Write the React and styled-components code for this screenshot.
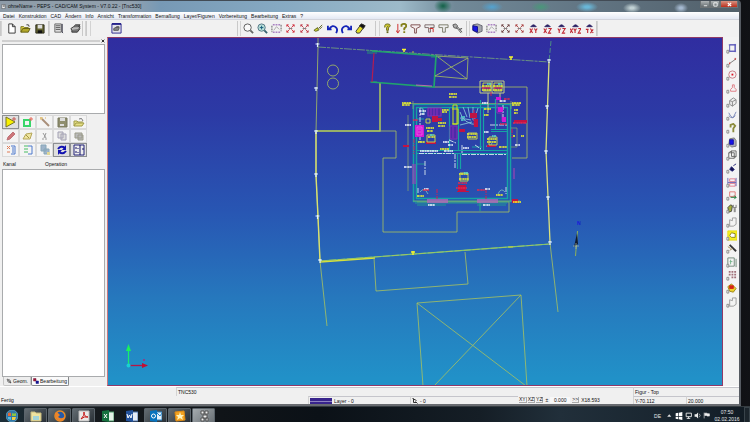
import React from "react";
import styled, { createGlobalStyle } from "styled-components";

const GlobalStyle = createGlobalStyle`
  * { box-sizing: border-box; }
  body { margin: 0; background: #08090c; }
  body, button, input { font-family: "Liberation Sans", Arial, sans-serif; font-size: 5px; line-height: 6px; color: #111; }
  button, input { margin: 0; padding: 0; border: 0; background: none; }
  svg { display: block; }
`;

const Desktop = styled.div`
  min-height: 100vh;
  display: flex;
  flex-direction: column;
  background: linear-gradient(90deg, #08090c 90%, #111216);
`;
const Window = styled.div`
  flex: 1;
  display: flex;
  flex-direction: column;
  margin-right: 9px;
  border-right: 2px solid #565b62;
  border-bottom: 2px solid #686b70;
  border-top-right-radius: 4px;
  background: #f0f0f0;
`;
const TitleBar = styled.header`
  height: 12px;
  display: flex;
  align-items: center;
  gap: 2px;
  padding: 0 1px 1px 1px;
  border-top: 1px solid #424b55;
  background:
    radial-gradient(ellipse 9px 7px at 443px 5px, #1c6650 10%, transparent),
    radial-gradient(ellipse 11px 5px at 492px 6px, #55a0cb 10%, transparent),
    radial-gradient(ellipse 10px 5px at 541px 6px, #4c957b 10%, transparent),
    radial-gradient(ellipse 11px 5px at 587px 6px, #69b6d7 20%, transparent),
    radial-gradient(ellipse 9px 5px at 632px 7px, #c1d1d4 20%, transparent),
    radial-gradient(ellipse 7px 5px at 681px 7px, #a5b9d0 20%, transparent),
    linear-gradient(90deg, #8d9ba7 0, #93a2af 130px, #7799b5 160px, #86a9c2 280px, #9dbac9 400px, #718998 455px, #607381 600px, #52606a 100%);
`;
const Title = styled.h1`
  flex: 1;
  margin: 0;
  font-size: 5px;
  font-weight: 400;
  color: #0b0e12;
`;
const Caption = styled.div`
  display: flex;
  align-self: flex-start;
`;
const CaptionButton = styled.button`
  width: ${(p) => (p.$close ? 18 : 10)}px;
  height: 7px;
  border: 1px solid #6d7376;
  border-top: 0;
  color: #fff;
  background: ${(p) => (p.$close ? "linear-gradient(#d89382,#bc2e1c)" : "linear-gradient(#aeb3b5,#646c70)")};
  svg { margin: auto; }
`;
const MenuBar = styled.nav`
  height: 8px;
  display: flex;
  align-items: center;
  gap: 4px;
  padding: 0 3px;
  background: linear-gradient(#fff, #e3e8f3);
  border-bottom: 1px solid #d2d4dc;
`;
const MenuItem = styled.button`
  white-space: nowrap;
`;
const ToolBar = styled.div`
  height: 17px;
  display: flex;
  align-items: center;
  background: #f1f1f1;
`;
const ToolGroup = styled.div`
  display: flex;
  align-items: center;
  margin-left: ${(p) => p.$gap || 0}px;
`;
const Tool = styled.button`
  width: 14px;
  height: 14px;
  display: grid;
  place-items: center;
`;
const Grip = styled.span`
  width: ${(p) => p.$width || 4}px;
  height: 15px;
  border-left: 1px solid #c9c9c9;
  border-right: 1px solid #d3d3d3;
`;
const Body = styled.div`
  flex: 1;
  display: flex;
`;
const SidePanel = styled.aside`
  width: 107px;
  display: flex;
  flex-direction: column;
  padding: 0 2px 0 2px;
`;
const PanelHead = styled.div`
  height: 7px;
  display: flex;
  align-items: center;
  gap: 1px;
`;
const PanelRule = styled.span`
  flex: 1;
  height: 2px;
  border: 1px solid #cfcfcf;
`;
const PanelClose = styled.button`
  width: 4px;
  height: 4px;
`;
const ListBox = styled.section`
  ${(p) => (p.$grow ? "flex: 1;" : "height: 70px;")}
  border: 1px solid #a9abad;
  background: #fff;
`;
const ToolGrid = styled.div`
  display: grid;
  grid-template-columns: repeat(5, 17px);
  grid-auto-rows: 14px;
  padding: 1px 0;
`;
const GridTool = styled.button`
  display: grid;
  place-items: center;
  border: 1px solid ${(p) => (p.$on ? "#8d8f92" : "#dadada")};
  background: ${(p) => (p.$on ? "#dfdfdf" : "#f4f4f4")};
`;
const ColumnHeads = styled.div`
  height: 11px;
  display: grid;
  grid-template-columns: 42px 1fr;
  align-items: center;
  padding-left: 1px;
`;
const Tabs = styled.div`
  height: 9px;
  display: flex;
  padding-left: 1px;
`;
const Tab = styled.button`
  display: flex;
  align-items: center;
  gap: 1px;
  padding: 0 ${(p) => (p.$on ? 1 : 2)}px;
  border: 1px solid ${(p) => (p.$on ? "#85878a" : "#c6c6c6")};
  border-top: 0;
  border-radius: 0 0 2px 2px;
  background: ${(p) => (p.$on ? "#fafafa" : "#ededed")};
`;
const Canvas = styled.main`
  flex: 1;
  min-width: 0;
  display: flex;
  border: 1px solid #913a68;
  border-left-color: #c87980;
  background: linear-gradient(#302da0 0%, #2c3aa5 22%, #2856b3 50%, #2678bd 75%, #2191c8 98%);
`;
const Drawing = styled.svg`
  width: 100%;
  height: 100%;
`;
const RightBar = styled.div`
  width: 16px;
  display: flex;
  flex-direction: column;
  align-items: center;
  padding-top: 5px;
  background: #f3f3f3;
`;
const RightTool = styled.button`
  width: 14px;
  height: 13px;
  display: grid;
  place-items: center;
  margin-bottom: ${(p) => (p.$loose ? 1 : 0)}px;
`;
const StatusBar = styled.footer`
  display: grid;
  grid-template-rows: 9px 8px;
  border-top: 1px solid #fff;
`;
const StatusRow = styled.div`
  display: grid;
  grid-template-columns: ${(p) => p.$cols};
`;
const Cell = styled.div`
  display: flex;
  align-items: center;
  gap: 2px;
  padding: 0 1px;
  white-space: nowrap;
  border-top: ${(p) => (p.$line ? 1 : 0)}px solid #c5c5cb;
  border-left: ${(p) => (p.$line ? 1 : 0)}px solid #d3d3d3;
`;
const Swatch = styled.span`
  width: 22px;
  height: 6px;
  border-top: 3px solid #38248c;
  border-bottom: 2px solid #38248c;
  background: #8c82be;
`;
const PlaneButton = styled.button`
  height: 6px;
  line-height: 5px;
  min-width: 7px;
  border: 1px solid #aaa;
  border-width: 0 1px 1px 0;
  & + & { margin-left: -1px; }
`;
const StepInput = styled.input`
  width: 20px;
  height: 6px;
  text-align: center;
  background: #f8f8f8;
`;
const TaskBar = styled.footer`
  height: 18px;
  display: flex;
  align-items: center;
  background: linear-gradient(90deg, #1c2f39 0, #171c20 60px, #101418 220px, #0b1117 320px, #151e26 480px, #212f3a 560px, #17232d 700px, #111a22);
  border-top: 1px solid #343b40;
`;
const TaskButton = styled.button`
  width: 23px;
  height: 16px;
  margin-right: 1px;
  display: grid;
  place-items: center;
  border-radius: 1px;
  border: 1px solid ${(p) => (p.$kind === "plain" ? "transparent" : "#5b646b")};
  background: ${(p) =>
    p.$kind === "active" ? "linear-gradient(135deg,#a4aaae,#686f74)" : p.$kind === "open" ? "linear-gradient(135deg,#636c72,#272e34)" : "none"};
`;
const Tray = styled.div`
  margin-left: auto;
  display: flex;
  align-items: center;
  gap: 2px;
  color: #e4e8eb;
`;
const Clock = styled.time`
  width: 30px;
  text-align: center;
  line-height: 7px;
`;
const ShowDesktop = styled.button`
  width: 6px;
  height: 17px;
  border: 1px solid #39434a;
  background: #1c252c;
`;

const Glyph = ({ size = 12, children }) => (
  <svg width={size} height={size} viewBox="0 0 12 12" fill="none" stroke="#333" strokeWidth="1" aria-hidden="true">{children}</svg>
);

const arrowsOut = (c) => <g stroke={c}><path d="M2 2l3 3M10 2L7 5M2 10l3-3M10 10L7 7M2 4V2h2M8 2h2v2M2 8v2h2M8 10h2V8" /><path d="M4 6h4" stroke="#777" /></g>;
const eye = (k) => (
  <>
    <path d="M3 4q3-4 6 0z" fill="#251d64" stroke="#322968" />
    <g stroke="#c02a35" strokeWidth="1.2">{k}</g>
  </>
);
const X = (x) => <path key={x} d={`M${x} 6l3 5M${x + 3} 6l-3 5`} />;
const Y = (x) => <path key={x} d={`M${x} 6l1.5 2.5L${x + 3} 6M${x + 1.5} 8v3`} />;
const Z = (x) => <path key={x} d={`M${x} 6h3l-3 5h3`} />;

const ICONS = {
  neu: <path d="M3 1h4l3 3v7H3zM7 1v3h3" fill="#fff" />,
  oeffnen: <><path d="M1 10V4h3l1 1h4v2" fill="#e4d74d" stroke="#736d17" /><path d="M1 10l2-4h8l-2 4z" fill="#b2a72a" stroke="#635d12" /><path d="M7 2q3-1 3 2" /></>,
  speichern: <><path d="M2 2h9v9H2z" fill="#63632f" stroke="#252516" /><path d="M4 2h5v4H4z" fill="#ddd" stroke="none" /><path d="M4 8h5v3H4z" fill="#111" stroke="none" /></>,
  liste: <><path d="M2 1h7v9H2z" fill="#ddd" stroke="#666" /><path d="M3 3h5M3 5h5M3 7h5" stroke="#555" /><path d="M10 1v9l1 1" stroke="#223" /></>,
  druck: <><path d="M1 6l3-2h7l-2 4H2z" fill="#bbb" /><path d="M4 4l2-2h5L9 4M2 8v2h6l3-4" fill="#777" /></>,
  druckrahmen: <><path d="M1 1h10v10H1z" fill="#e3e3ea" stroke="#26228b" strokeWidth="1" /><path d="M1 1h10" stroke="#26228b" strokeWidth="2" /><path d="M3 6l2-1h4L8 8H3zM5 5l1-1h3" fill="#888" stroke="#555" /></>,
  lupe: <><circle cx="5" cy="5" r="4" stroke="#555" fill="#fafafa" /><path d="M8 8l3 3" strokeWidth="2" stroke="#666" /></>,
  lupeplus: <><circle cx="5" cy="5" r="4" stroke="#4e7180" fill="#b9e0da" /><path d="M3 5h4M5 3v4" stroke="#165b79" /><path d="M8 8l3 3" strokeWidth="2" stroke="#366270" /></>,
  fenster: <><path d="M2 2h8M2 10h8" stroke="#7d3ba5" strokeDasharray="2 1" /><path d="M1 3v7M11 2v7" stroke="#555" strokeDasharray="2 1" /><path d="M3 8l3-4 3 3" stroke="#aaa" /></>,
  alles: arrowsOut("#d12c3a"),
  alles2: arrowsOut("#be3544"),
  pinsel: <path d="M1 8l4-3 1 3-3 1zM6 6l4-4M7 7l3-3" fill="#d5dc32" stroke="#5a5e1f" />,
  undo: <path d="M1 3v4h4M2 7q4-6 8-2 2 2 0 6" stroke="#1525b8" strokeWidth="2" />,
  redo: <path d="M11 3v4H7M10 7Q6 1 2 5q-2 2 0 6" stroke="#1525b8" strokeWidth="2" />,
  radierer: <><path d="M1 9l6-8 4 2-6 8-3 0z" fill="#e2db24" stroke="#333" /><path d="M5 3l2-2 4 2-2 3z" fill="#111" /></>,
  frage: <><path d="M3 5V3q0-2 3-2t3 2q0 1-2 2v3H5V5l2-2" fill="#cfc92d" stroke="#67651b" /><path d="M5 10h2" stroke="#67651b" strokeWidth="2" /></>,
  frage2: <><path d="M2 1v9M0 8l2 3 2-3" stroke="#c22" /><path d="M6 4V2q3-2 5 0v2L9 6v2M8 10h2" stroke="#85811b" strokeWidth="2" /></>,
  filter: <path d="M1 2h10v2L7 6v5H5V6L1 4z" fill="#f4eeee" stroke="#7c4b4b" />,
  filter2: <><path d="M1 2h10v3H7v5H5V5H1z" fill="#eee" stroke="#766" /><path d="M6 6h4v4" stroke="#c22" /></>,
  filter3: <path d="M1 2h10v3H8v5H5V5H1z" fill="#eee" stroke="#776" />,
  schluessel: <><path d="M1 2l3-1 2 2-1 3-3-1zM5 5l5 6M6 4l5 6" fill="#aaa" stroke="#555" /><path d="M8 7l3-1" /></>,
  solid: <><path d="M1 2l5-1 5 2v6l-5 2-5-3z" fill="#a5a6ac" stroke="#626471" /><path d="M1 3l5 1v6L1 8z" fill="#1b18e3" stroke="#11108d" /></>,
  kreuz: arrowsOut("#6b3d3d"),
  kreuz2: arrowsOut("#ab3f3f"),
  xy: eye([X(2), Y(7)]), xz: eye([X(2), Z(7)]), yz: eye([Y(2), Z(7)]),
  xyz: eye([X(0), Y(4), Z(9)]), rot: eye(<path d="M2 7h3M4 7v4M7 6l3 5M7 11l3-4" />),
};

const PANEL_TOOLS = [
  ["Start", 1, <path d="M1 1l9 5-9 5z" fill="#f8f000" stroke="#777526" />, <path d="M9 1v4M7 3h4" stroke="#c75a55" />],
  ["Neue Operation", 0, <path d="M2 4h6v6H2z" stroke="#39d66a" strokeWidth="2" />, <path d="M9 1v4M7 3h4" stroke="#e8685c" />],
  ["Assistent", 0, <path d="M3 3l7 7" stroke="#a98f7a" strokeWidth="2" />, <path d="M2 1v3M1 2h3M6 2h1" stroke="#dbb35e" />],
  ["Sichern", 0, <path d="M2 2h9v9H2z" fill="#8f8e6e" stroke="#77765c" />, <path d="M4 2h5v3H4zM4 8h4v2H4z" fill="#ddd" stroke="none" />],
  ["Laden", 0, <path d="M1 10V5h3l1 1h5M1 10l2-3h8l-2 3z" fill="#e5df85" stroke="#a09b48" />, <path d="M6 3q3-2 4 2" stroke="#777" />],
  ["Ändern", 0, <path d="M2 10l1-3 5-5 2 2-5 5z" fill="#ce777a" stroke="#be737a" />],
  ["Löschen", 0, <path d="M1 9l3-5 6-1-2 6z" fill="#efe6a0" stroke="#b5a65a" />, <path d="M4 5l3 3" stroke="#a59440" />],
  ["Ausschneiden", 0, <path d="M4 3l3 5M7 3L5 8M4 8v2M7 8v2" stroke="#999" />],
  ["Kopieren", 0, <path d="M2 2h5v6H2zM5 4h5v6H5z" fill="#ddd" stroke="#a3a1b4" />],
  ["Einfügen", 0, <path d="M2 3h7v5H2zM5 5h5v5H5z" fill="#bbb" stroke="#9b9b8b" />],
  ["Eingang", 0, <path d="M6 2h4v8H6M8 3v6" stroke="#4c78cc" />, <path d="M2 2l3 3M5 2L2 5M2 8h3" stroke="#e07b55" />],
  ["Ausgang", 0, <path d="M6 2h4v8H6" stroke="#4c78cc" />, <path d="M2 2h4M2 5h4M2 8h4" stroke="#49bd63" />],
  ["Ebenen", 0, <path d="M2 1h5v6H2zM5 5h5v5H5z" fill="#9eb4ca" stroke="#87a6b8" />, <path d="M8 8h3v3H8z" fill="#e0d798" stroke="none" />],
  ["Aktualisieren", 1, <path d="M2 5q3-4 7-1M10 7q-3 4-7 1" stroke="#1111b0" strokeWidth="2" />, <path d="M10 1v5H6zM2 11V6h4z" fill="#1111b0" stroke="none" />],
  ["Ansicht teilen", 1, <path d="M1 1h10v10H1z" fill="#eee" stroke="#22227a" strokeWidth="1" />, <path d="M7 1v10M3 3v2M3 7v2M5 4v1M5 8v1M9 5h2" stroke="#141466" />],
];

const corner = <path d="M1 8h2v3H1z" fill="#fff" stroke="#888" strokeWidth="1" />;
const RIGHT_TOOLS = [
  ["Punkt", <path d="M4 2h6v7H4zM3 2h8M3 9h8M10 1v9" stroke="#5653b8" />],
  ["Linie", <path d="M4 7l7-5" stroke="#777" />, <path d="M4 6v2M10 1v2" stroke="#c11" strokeWidth="1" />],
  ["Kreis", <circle cx="7" cy="5" r="4" stroke="#c77882" />, <path d="M6 5h2" stroke="#d12" strokeWidth="2" />],
  ["Kontur", <path d="M5 9V7l2-2V2h2v3l2 2v2z" stroke="#de7a82" />],
  ["Körper", <path d="M4 4l4-3 3 2v4l-4 3-3-2zM4 4l3 1v5M7 5l4-2" fill="#eee" stroke="#888" />],
  ["Kurve", <path d="M3 3q3 6 5 5l3-6M3 6q4 5 7 0" stroke="#7482b5" />],
  ["Abfrage", <path d="M5 5V2l3-1 2 2-2 3v4" stroke="#8b8b3c" strokeWidth="2" />],
  ["Volumen", <path d="M4 2l5-1 2 3v6l-5 1-3-3z" fill="#aab" stroke="#777" />, <path d="M4 3h4v5H4z" fill="#1611ed" stroke="#1513a0" />],
  ["Gitter", <path d="M3 3h6v6H3zM6 1h5v6H6zM3 3l3-2M9 9l2-2" stroke="#666" />],
  ["Trimmen", <path d="M4 7l2-3 3 3-2 2zM8 3l3-2" fill="#131350" stroke="#222276" />],
  ["Maß", <path d="M4 2h6v3H4zM4 7h6v3H4z" stroke="#df7c8c" />, <path d="M2 1v7M11 1v9M2 6h9" stroke="#6e67b5" />],
  ["Verschieben", <path d="M4 2h6v5H4z" stroke="#e07575" />, <path d="M5 8h6M9 6l2 2-2 2" stroke="#147630" />],
  ["Werkzeuge", <path d="M2 5l3-3 2 1-1 6-3 1z" fill="#a4af3c" stroke="#444" />, <path d="M8 2v3l1 1v4M11 2v3l-1 1v4M8 5h3" stroke="#777" />],
  ["Fläche", <path d="M4 3l3 1V1h4v7l-3 2H4z" stroke="#999" />],
  ["Tasche", <path d="M2 1h10v10H2z" fill="#f5ef20" stroke="#e2da13" />, <path d="M4 6l2-3 4 1v4H6z" fill="#fff" stroke="#87811a" />],
  ["Zauberstab", <path d="M4 2l7 7" strokeWidth="2" />, <path d="M2 4l3 2M4 8l3-2" stroke="#9b8951" />],
  ["Tabelle", <path d="M2 1h7v9H2zM11 2v9" stroke="#6c8676" />, <path d="M4 5h3M5 3v5" stroke="#75b48a" />],
  ["Muster", <path d="M3 2h2M6 2h2M9 2h2M3 5h2M6 5h2M9 5h2M6 8h2M9 8h2" stroke="#a0707a" strokeWidth="2" />],
  ["Fräsen", <path d="M2 4l4-3 5 5-3 4-4-1z" fill="#ecd12b" stroke="#9a831a" />, <path d="M4 3h4v3H4z" fill="#d42516" stroke="#d42516" />],
  ["Rahmen", <path d="M4 3l3 1V1h4v7l-3 2H4z" stroke="#999" />],
];

const toolsFor = (list) => list.map((n) => (
  <Tool key={n} aria-label={n} title={n}><Glyph size={11}>{ICONS[n]}</Glyph></Tool>
));

const Marks = ({ fill, items }) => (
  <g fill={fill} stroke="none">{items.map(([x, y, w, h], i) => <rect key={i} x={x} y={y} width={w} height={h} />)}</g>
);
const Lettering = ({ color, items }) => (
  <g stroke={color} strokeWidth="1.6">{items.map(([x, y, w], i) => <path key={i} d={`M${x} ${y}h${w}`} strokeDasharray={i % 2 ? "2 .4 1 .3" : "1.6 .3 2.5 .4"} />)}</g>
);

const TREES = [[317.5, 44], [316, 88], [316, 131], [316, 174], [317.5, 216], [320, 260], [549, 60], [547, 106], [546, 151], [548, 197], [550, 242]];

const SitePlan = () => (
  <g stroke="#a9c35e" strokeWidth=".8">
    <path d="M318 37v10L316 132v43l2 42 2 44 7 65" />
    <path d="M316 132v43l2 42 2 44" stroke="#d9e070" strokeWidth="1.4" />
    <path d="M318 47L549 62" strokeDasharray="8 1 3 1" stroke="#78aa79" />
    <path d="M551 41l-2 21" stroke="#53a67c" strokeDasharray="5 2" />
    <path d="M549 62l-3 89 4 91" stroke="#dbe17b" strokeWidth="1.3" />
    <path d="M550 243l8 69" />
    <path d="M320 261l230-17" stroke="#72c979" strokeWidth="1.2" />
    <path d="M320 262l55-4" stroke="#d6e13b" strokeWidth="1.6" />
    <path d="M320 261l230-17" strokeDasharray="7 2" />
    <path d="M374 258l2 33 92-7-3-32" />
    <path d="M417 303l104-8 6 91M417 303l6 83M417 303l109 83M521 295l-87 91" />
    <circle cx="333" cy="70.500" r="5.500" /><circle cx="333" cy="83.500" r="5.500" />
    <path d="M380 83v48M316 131h80v27h-13v74h74v-20h52v-10M434 87h93v71h-15" />
    <path d="M380 83v48h-64" strokeWidth="1.3" />
    <path d="M372 51l64 5-2 31-63-5" stroke="#20a36d" strokeWidth="1.7" />
    <path d="M367 51h10M367 53h10M431 57h10M370 82h7" stroke="#23a86d" />
    <path d="M374 53l-2 29" stroke="#b21d51" strokeWidth="1.2" />
    <path d="M416 85l16 1" stroke="#dc72b0" />
    <path d="M436 56l32 2-1 21-32-3M438 57l29 22M435 76l33-18" />
    <path d="M402 49.500h4M404 49v3M509 57h4M511 57v3M411 252h4M413 251v4" stroke="#f4f52d" strokeWidth="1.5" />
    <path d="M412 52h2M508 247h5" stroke="#d6dd26" />
    <g stroke="#e2f2ff">{TREES.map(([x, y]) => <path key={`${x}-${y}`} d={`M${x - 2} ${y}h4M${x} ${y - 1}v4`} strokeWidth="1.2" />)}</g>
  </g>
);

const FloorPlan = () => (
  <g strokeWidth="1">
    <g stroke="#16a3a4">
      <path d="M413.500 104.500h97v97h-97zM416.500 107.500h91v91h-91z" strokeWidth="1.5" />
      <path d="M416 150.500h92M416 153.500h92M457.500 153v16M460.500 153v16M449.500 107v43M458.500 107v43M480.500 100v50M483.500 107v43M491 129.500h17M491 131.500h17M495.500 99v30" strokeWidth="1.2" />
      <path d="M480 201v10" stroke="#1db185" />
      <path d="M423 107v8M417 119h7M472 147h10" />
    </g>
    <path d="M403 103.500h118M413 101v8M511 101v8M413 201h107M511 128h6v19h-6M408 115v76M417 202h92" stroke="#8eac66" strokeWidth=".7" />
    <path d="M415 203h92M417 205h29M477 205h29M417 164h8" stroke="#22a991" strokeWidth=".8" />
    <path d="M427 200h21M477 200h21M427 202h21M477 202h21" stroke="#b766bd" strokeWidth="1.4" />
    <path d="M413 164v20M415 164v20M514 168v11" stroke="#9b45b5" strokeWidth="1.2" />
    <g stroke="#8430b8" fill="#4f2aa8"><path d="M428 108h13v8h-13zM431 108v8M434 108v8M437 108v8" strokeWidth="1.2" /><path d="M450 126h7v13h-7zM453 127v11" /><path d="M497 100v13h5v8" fill="none" /></g>
    <path d="M460 112q3 12 18 13M463 107l4 10M468 107l2 11M473 107v13M478 108l-4 13M460 118l11 2M460 125l12-3" stroke="#82c0d8" strokeWidth=".9" />
    <path d="M480 81h24v12h-24zM492 81v12M488 93v20M500 93v9" stroke="#c3cd85" />
    <path d="M453 105h4v19h-4zM452 109h6v15h-6" stroke="#cbe51e" />
    <path d="M420 108v34M419 153.500h36M462 154.500h44M455 154v14M462 145v9M425 161v14M449 140l7 3M475 145l6 4M490 125h17M503 105v15M418 188v6M506 187v7" stroke="#d7e6f1" strokeDasharray="5 1 2 1" strokeWidth=".9" />
    <path d="M420 192q4-6 8 2M498 194q3-7 7-2M424 113q0-5-4-5M486 146q4 2 6-3" stroke="#74b9c1" strokeWidth=".9" />
    <path d="M512 129v9M414 139v15M491 92v5M437 189v10M486 189v10M474 110v15" stroke="#d11e52" strokeDasharray="4 1 1 1" />
    <Marks fill="#d317d5" items={[[415, 125, 9, 12], [498, 107, 5, 5], [502, 117, 4, 5], [496, 97, 5, 3]]} />
    <path d="M417 127h5v8h-5zM418 129h3M418 132h3" stroke="#f07ded" strokeWidth=".6" />
    <Marks fill="#c21344" items={[[432, 116, 6, 6], [438, 118, 4, 3], [470, 113, 7, 5], [459, 129, 6, 3], [426, 142, 10, 2], [458, 185, 8, 7], [474, 119, 4, 8], [403, 145, 6, 2], [514, 120, 13, 3], [512, 199, 6, 4], [487, 145, 9, 2], [457, 191, 12, 1]]} />
    <Lettering color="#f6fb26" items={[[449, 94, 8], [449, 97, 8], [402, 103, 9], [402, 105, 8], [512, 103, 9], [512, 105, 8], [442, 110, 7], [442, 112, 5], [438, 123, 8], [438, 126, 7], [426, 128, 8], [427, 131, 6], [418, 142, 7], [482, 86, 9], [482, 90, 9], [493, 86, 10], [493, 90, 9], [484, 109, 7], [484, 115, 5], [467, 134, 10], [467, 137, 9], [487, 139, 10], [487, 142, 9], [428, 137, 7], [440, 149, 9], [499, 147, 8], [459, 174, 9], [459, 179, 10], [514, 110, 4], [514, 113, 4], [513, 202, 8], [513, 136, 2], [521, 136, 3], [417, 196, 7], [496, 195, 7]]} />
    <g stroke="#d2df44" strokeWidth=".9"><path d="M468 133h9v6h-9zM460 173h8v8h-8zM427 135h8v7h-8zM489 137h8v8h-8zM483 83h8v8h-8zM494 83h8v8h-8zM426 119h4v4h-4z" /></g>
    <Lettering color="#56dfce" items={[[461, 117, 4], [461, 120, 4], [464, 173, 4], [430, 135, 4], [487, 84, 4], [498, 84, 4], [492, 136, 4]]} />
    <Lettering color="#f4f8ff" items={[[405, 125, 6], [419, 111, 7], [420, 114, 5], [404, 167, 8], [428, 205, 7], [483, 205, 7], [443, 142, 6], [448, 145, 5], [463, 148, 6], [500, 101, 6], [482, 103, 6], [515, 145, 5], [420, 151, 18], [444, 151, 9], [424, 189, 5], [485, 189, 5], [484, 132, 5]]} />
    <Lettering color="#e22a50" items={[[413, 120, 5], [504, 99, 6], [456, 188, 11], [458, 183, 9], [423, 190, 6], [477, 190, 8], [500, 124, 7], [513, 123, 13], [482, 88, 8], [494, 88, 8]]} />
  </g>
);

const CadDrawing = () => (
  <Drawing viewBox="108 38 614 347" fill="none" role="img" aria-label="Lageplan mit Grundriss">
    <SitePlan />
    <FloorPlan />
    <path d="M128.500 365v-15" stroke="#18ec70" strokeWidth="1.3" /><path d="M126 351l2.500-7 2.500 7z" fill="#19f35a" />
    <path d="M129 365.500h14" stroke="#b81547" strokeWidth="1.3" /><path d="M142 363l6 2.500-6 2.500z" fill="#c30e32" />
    <circle cx="128.500" cy="365.500" r="2" fill="#19cfd4" /><path d="M143 359l2 2M145 359l-2 2" stroke="#ad2775" strokeWidth=".7" />
    <path d="M577.500 231l-2 25" stroke="#8eb15a" /><path d="M577 233l1 11-4 3z" fill="#101b31" /><path d="M573 246h6M576 243v6" stroke="#b0bda3" strokeWidth=".7" />
    <text x="577" y="225" fontSize="5" fontWeight="700" fill="#1616db">N</text>
  </Drawing>
);

const TASKS = [
  ["Start", "plain", <><circle cx="6" cy="6" r="6" fill="#3178a9" stroke="#79b9d3" strokeWidth=".6" /><path d="M2 3q2-1 3 0v3H2z" fill="#e56734" stroke="none" /><path d="M6 3q2 1 4 0v3H6z" fill="#8cc640" stroke="none" /><path d="M2 7h3v3L2 9z" fill="#53bce6" stroke="none" /><path d="M6 7h4l-1 3H6z" fill="#f2ce42" stroke="none" /></>],
  ["Explorer", "open", <><path d="M1 2h4l1 1h5v8H1z" fill="#f0e3a0" stroke="#c5b87d" /><path d="M3 6h6v4H3z" fill="#a4d4d8" stroke="none" /></>],
  ["Firefox", "open", <><circle cx="6" cy="6" r="5" fill="#265aa8" stroke="#e88b24" strokeWidth="1.500" /><path d="M1 3q0 8 6 8 4 0 4-5-3 4-7 1l2-2-3-3z" fill="#ee8528" stroke="none" /></>],
  ["Adobe Reader", "open", <><path d="M1 1h10v10H1z" fill="#ece9e8" stroke="#bbb" /><path d="M3 9q4-4 3-7 0 5 4 5-4-1-7 2" stroke="#c51818" /></>],
  ["Excel", "plain", <><path d="M6 2h6v9H6z" fill="#e4f1e8" stroke="#4c9a6a" /><path d="M0 1l7-1v12l-7-1z" fill="#17713f" stroke="none" /><path d="M2 4l3 4M5 4L2 8" stroke="#fff" /></>],
  ["Word", "plain", <><path d="M6 2h6v9H6z" fill="#e5ecf6" stroke="#4c74b0" /><path d="M0 1l7-1v12l-7-1z" fill="#24539c" stroke="none" /><path d="M1 4l1 4 1.500-3L5 8l1-4" stroke="#fff" /></>],
  ["Outlook", "open", <><path d="M6 2h6v8H6z" fill="#e5f1fa" stroke="#2683c7" /><path d="M7 3l3 3 2-3" stroke="#2683c7" /><path d="M0 1l7-1v12l-7-1z" fill="#0873bd" stroke="none" /><circle cx="3.500" cy="6" r="2" stroke="#fff" /></>],
  ["Bilder", "open", <><path d="M1 2l9-1 1 9-9 1z" fill="#f3a321" stroke="#df8b14" /><path d="M6 2l1 3h3L8 7l1 3-3-2-3 2 1-3-2-2h3z" fill="#fff4be" stroke="none" /></>],
  ["PEPS", "active", <><path d="M3 1h3v3H3zM7 1h3v3H7zM5 5h4v3H5zM3 8h3v3H3zM8 8h2v3H8z" fill="#eee" stroke="#555" /></>],
];

const MENUS = ["Datei", "Konstruktion", "CAD", "Ändern", "Info", "Ansicht", "Transformation", "Bemaßung", "Layer/Figuren", "Vorbereitung", "Bearbeitung", "Extras", "?"];

export default function App() {
  return (
    <Desktop>
      <GlobalStyle />
      <Window>
        <TitleBar>
          <Glyph size={5}><path d="M2 1h8v10H2zM5 3h3v3H5z" fill="#eee" /></Glyph>
          <Title>ohneName - PEPS - CAD/CAM System - V7.0.22 - [Tnc530]</Title>
          <Caption>
            <CaptionButton aria-label="Minimieren"><Glyph size={5}><path d="M2 9h8" stroke="#fff" strokeWidth="2" /></Glyph></CaptionButton>
            <CaptionButton aria-label="Maximieren"><Glyph size={5}><path d="M2 2h8v8H2z" stroke="#fff" strokeWidth="2" /></Glyph></CaptionButton>
            <CaptionButton $close aria-label="Schließen"><Glyph size={5}><path d="M2 2l8 8M10 2l-8 8" stroke="#fff" strokeWidth="3" /></Glyph></CaptionButton>
          </Caption>
        </TitleBar>
        <MenuBar>{MENUS.map((m) => <MenuItem key={m}>{m}</MenuItem>)}</MenuBar>
        <ToolBar>
          <Grip $width={2} />
          <ToolGroup $gap={2}>{toolsFor(["neu", "oeffnen", "speichern"])}</ToolGroup>
          <ToolGroup $gap={2}><Grip $width={1} /></ToolGroup>
          <ToolGroup $gap={1}>{toolsFor(["liste"])}</ToolGroup>
          <ToolGroup $gap={3}>{toolsFor(["druck"])}<Grip /><Grip $width={5} /></ToolGroup>
          <ToolGroup $gap={18}>{toolsFor(["druckrahmen"])}</ToolGroup>
          <ToolGroup $gap={114}><Grip /></ToolGroup>
          <ToolGroup>{toolsFor(["lupe", "lupeplus", "fenster", "alles", "alles2", "pinsel", "undo", "redo", "radierer"])}</ToolGroup>
          <ToolGroup $gap={8}><Grip $width={5} />{toolsFor(["frage", "frage2", "filter", "filter2", "filter3", "schluessel"])}</ToolGroup>
          <ToolGroup $gap={2}><Grip />{toolsFor(["solid", "fenster", "kreuz", "kreuz2", "xy", "xz", "yz", "xyz", "rot"])}<Grip $width={1} /></ToolGroup>
        </ToolBar>
        <Body>
          <SidePanel>
            <PanelHead><PanelRule /><PanelClose aria-label="Leiste schließen"><Glyph size={4}><path d="M2 2l8 8M10 2l-8 8" strokeWidth="3" /></Glyph></PanelClose></PanelHead>
            <ListBox aria-label="Vorschau" />
            <ToolGrid>
              {PANEL_TOOLS.map(([n, on, a, b]) => <GridTool key={n} $on={on} aria-label={n}><Glyph>{a}{b}</Glyph></GridTool>)}
            </ToolGrid>
            <ColumnHeads><span>Kanal</span><span>Operation</span></ColumnHeads>
            <ListBox $grow aria-label="Operationen" />
            <Tabs>
              <Tab><Glyph size={6}><path d="M2 2l6 2 2 6-6-2z" fill="#ccc" /><path d="M4 4l6 6" /></Glyph>Geom.</Tab>
              <Tab $on><Glyph size={6}><path d="M1 1h5v5H1z" fill="#9a173a" stroke="#7b1737" /><path d="M6 6h5v5H6z" fill="#16168e" stroke="#16168e" /></Glyph>Bearbeitung</Tab>
            </Tabs>
          </SidePanel>
          <Canvas><CadDrawing /></Canvas>
          <RightBar>
            {RIGHT_TOOLS.map(([n, a, b], i) => <RightTool key={n} $loose={i % 3 === 0} aria-label={n}><Glyph size={11}>{a}{b}{corner}</Glyph></RightTool>)}
          </RightBar>
        </Body>
        <StatusBar>
          <StatusRow $cols="176px 1fr 106px">
            <Cell /><Cell $line>TNC530</Cell><Cell $line>Figur - Top</Cell>
          </StatusRow>
          <StatusRow $cols="308px 102px 1fr 115px 53px 53px">
            <Cell>Fertig</Cell>
            <Cell $line><Swatch />Layer - 0</Cell>
            <Cell $line><Glyph size={6}><path d="M1 1l8 4M3 1v8h6M7 7l4 4" strokeWidth="2" /></Glyph>- 0</Cell>
            <Cell>
              <PlaneButton>XY</PlaneButton><PlaneButton>XZ</PlaneButton><PlaneButton>YZ</PlaneButton>
              <span>±</span>
              <StepInput aria-label="Schrittweite" defaultValue="0.000" />
              <PlaneButton aria-label="Weiter">&gt;&gt;</PlaneButton>
              <span>X18.593</span>
            </Cell>
            <Cell $line>Y-70.112</Cell>
            <Cell $line>20.000</Cell>
          </StatusRow>
        </StatusBar>
      </Window>
      <TaskBar>
        {TASKS.map(([n, kind, art]) => <TaskButton key={n} $kind={kind} aria-label={n}><Glyph size={12}>{art}</Glyph></TaskButton>)}
        <Tray>
          <span>DE</span>
          <Glyph size={10}><path d="M5 7h5L7.500 4z" fill="#ddd" stroke="none" /></Glyph>
          <Glyph size={8}><path d="M1 2l4-1v5H1zM6 1l5-1v6H6zM1 7h4v4l-4-1zM6 7h5v5l-5-1z" fill="#fff" stroke="none" /></Glyph>
          <Glyph size={7}><path d="M2 2h9v6H2zM6 8v3M3 11h6" stroke="#eee" strokeWidth="1.500" /></Glyph>
          <Glyph size={7}><path d="M1 4h3l3-3v10L4 8H1z" fill="#eee" stroke="none" /><path d="M9 3q3 3 0 6" stroke="#eee" /></Glyph>
          <Glyph size={7}><path d="M2 1v10M3 2h4l1 1h3v4H7L6 6H3z" fill="#eee" stroke="#eee" /></Glyph>
          <Clock>07:50<br />02.02.2016</Clock>
          <ShowDesktop aria-label="Desktop anzeigen" />
        </Tray>
      </TaskBar>
    </Desktop>
  );
}
